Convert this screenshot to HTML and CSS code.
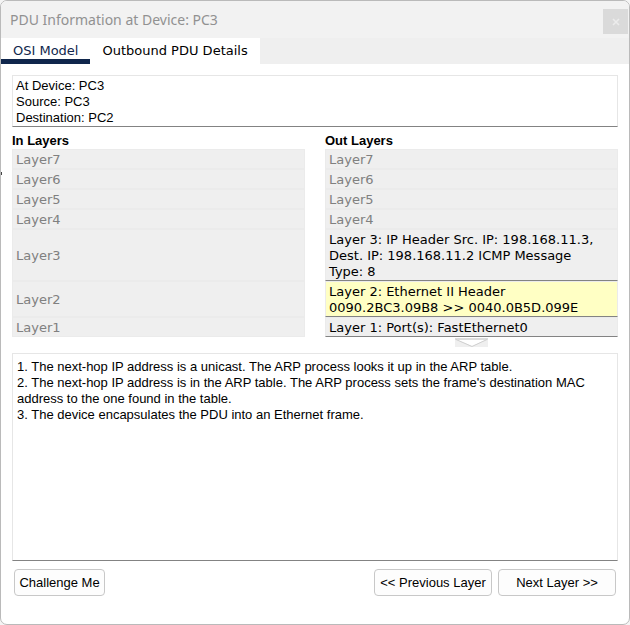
FILE: index.html
```html
<!DOCTYPE html>
<html lang="en">
<head>
<meta charset="utf-8">
<meta name="viewport" content="width=device-width, initial-scale=1">
<title>PDU Information at Device: PC3</title>
<link rel="stylesheet" href="styles.css">
</head>
<body>
<main class="window">
  <header class="titlebar">
    <h1 class="title">PDU Information at Device: PC3</h1>
    <button class="close" type="button" aria-label="Close">
      <svg width="8" height="8" viewBox="0 0 8 8" aria-hidden="true"><path d="M1 1 L7 7 M7 1 L1 7" fill="none" stroke="#ececec" stroke-width="1.6"/></svg>
    </button>
  </header>
  <nav class="tabs" role="tablist">
    <button class="tab tab-active" type="button" role="tab" aria-selected="true">OSI Model</button>
    <button class="tab" type="button" role="tab" aria-selected="false">Outbound PDU Details</button>
  </nav>
  <div class="content">
    <textarea class="box summary" rows="3" readonly aria-label="Device summary">At Device: PC3
Source: PC3
Destination: PC2</textarea>
    <section class="layers">
      <h2 class="heading">In Layers</h2>
      <button class="layer" type="button" disabled>Layer7</button>
      <button class="layer" type="button" disabled>Layer6</button>
      <button class="layer" type="button" disabled>Layer5</button>
      <button class="layer" type="button" disabled>Layer4</button>
      <button class="layer" type="button" disabled>Layer3</button>
      <button class="layer" type="button" disabled>Layer2</button>
      <button class="layer" type="button" disabled>Layer1</button>
      <h2 class="heading">Out Layers</h2>
      <button class="layer" type="button" disabled>Layer7</button>
      <button class="layer" type="button" disabled>Layer6</button>
      <button class="layer" type="button" disabled>Layer5</button>
      <button class="layer" type="button" disabled>Layer4</button>
      <button class="layer layer-used" type="button">Layer 3: IP Header Src. IP: 198.168.11.3, Dest. IP: 198.168.11.2 ICMP Message Type: 8</button>
      <button class="layer layer-used layer-selected" type="button">Layer 2: Ethernet II Header 0090.2BC3.09B8 &gt;&gt; 0040.0B5D.099E</button>
      <button class="layer layer-used" type="button">Layer 1: Port(s): FastEthernet0</button>
    </section>
    <div class="flow">
      <svg class="arrow" width="33" height="9" viewBox="0 0 33 9" aria-hidden="true"><rect width="33" height="9" fill="#efefef"/><path d="M1 1 H32 L17 8 Z" fill="#fff"/><path d="M0 1 H33" stroke="#dcdcdc" stroke-width="2"/><path d="M1 1.5 L17 8.5 L32 1.5" fill="none" stroke="#cfcfcf"/></svg>
    </div>
    <textarea class="box details" readonly aria-label="Layer details">1. The next-hop IP address is a unicast. The ARP process looks it up in the ARP table.
2. The next-hop IP address is in the ARP table. The ARP process sets the frame's destination MAC address to the one found in the table.
3. The device encapsulates the PDU into an Ethernet frame.</textarea>
    <footer class="actions">
      <button class="action challenge" type="button">Challenge Me</button>
      <button class="action" type="button">&lt;&lt; Previous Layer</button>
      <button class="action" type="button">Next Layer &gt;&gt;</button>
    </footer>
  </div>
</main>
</body>
</html>
```
FILE: styles.css
```css
* {
  box-sizing: border-box;
}

body {
  margin: 0;
  background: #f4f4f4;
  color: #000;
  font: 13px/16px "Liberation Sans", Arial, sans-serif;
}

button,
textarea {
  margin: 0;
  border: 0;
  border-radius: 0;
  color: inherit;
  font: inherit;
}

.window {
  position: relative;
  display: flex;
  flex-direction: column;
  min-height: 100vh;
  overflow: hidden;
  border: 1px solid #bababa;
  border-radius: 7px;
  background: #fff;
}

/* Sliver of the workspace pointer at the left edge */
.window::before {
  content: "";
  position: absolute;
  top: 171px;
  left: 0;
  width: 1px;
  height: 3px;
  background: #444;
}

.titlebar {
  display: flex;
  align-items: center;
  justify-content: space-between;
  height: 37px;
  padding: 0 1px 0 9px;
  background: #f2f2f2;
}

.title {
  margin: 0;
  color: #919191;
  font: 14px/20px "Noto Sans", "Open Sans", sans-serif;
}

.close {
  display: flex;
  align-self: flex-end;
  align-items: center;
  justify-content: center;
  width: 25px;
  height: 25px;
  margin-bottom: 4px;
  padding: 0;
  background: #dadada;
}

.tabs {
  display: flex;
  height: 26px;
  background: #efefef;
  font: 13px/16px "DejaVu Sans", Verdana, sans-serif;
}

.tab {
  padding: 5px 12px 0;
  border-bottom: 5px solid #fff;
  background: #fff;
}

.tab-active {
  border-color: #10264c;
  color: #10264c;
}

.content {
  display: flex;
  flex: 1;
  flex-direction: column;
  padding: 11px 11px 28px;
}

.box {
  display: block;
  width: 100%;
  overflow: hidden;
  resize: none;
  outline: none;
  border: 1px solid #e6e6e6;
  border-bottom-color: #838383;
  background: #fff;
}

.summary {
  padding: 2px 3px 0;
}

.layers {
  display: grid;
  grid-template-columns: 1fr 1fr;
  grid-template-rows: repeat(8, auto);
  grid-auto-flow: column;
  column-gap: 20px;
  padding-top: 6px;
}

.heading {
  margin: 0;
  font-size: 13px;
  line-height: 16px;
}

.layer {
  padding: 2px 10px 0 3px;
  border: 1px solid #ebebeb;
  background: #efefef;
  color: #808080;
  font: 13px/16px "DejaVu Sans", Verdana, sans-serif;
  text-align: left;
}

.layer-used {
  border-bottom-color: #838383;
  color: #000;
}

.layer-selected {
  background: #ffffc4;
}

.flow {
  display: grid;
  grid-template-columns: 1fr 1fr;
  column-gap: 20px;
  height: 16px;
}

.arrow {
  grid-column: 2;
  justify-self: center;
  margin-top: 1px;
}

.details {
  flex: 1;
  padding: 5px 4px;
}

.actions {
  display: flex;
  gap: 6px;
  padding: 8px 2px 0;
}

.action {
  width: 118px;
  height: 27px;
  padding: 0;
  border: 1px solid #c8c8c8;
  border-radius: 4px;
  background: #fdfdfd;
}

.challenge {
  width: 91px;
  margin-right: auto;
}
```
